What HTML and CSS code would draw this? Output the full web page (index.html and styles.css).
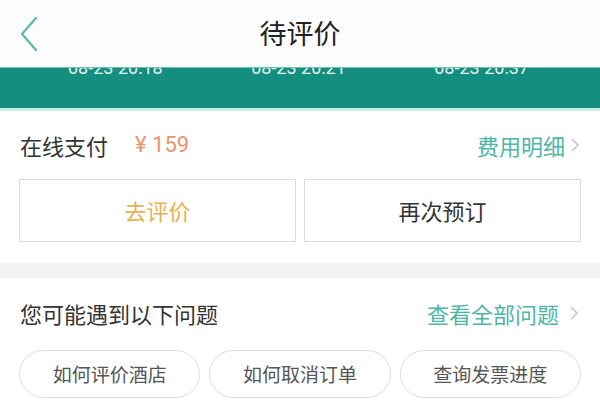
FILE: index.html
```html
<!DOCTYPE html>
<html lang="zh-CN">
<head>
	<meta charset="UTF-8">
	<title>待评价</title>
	<link rel="stylesheet" href="styles.css">
</head>
<body>
	<!-- 顶部导航 -->
	<div class="nav">
		<a href="#" class="back">
			<svg width="18" height="34" viewBox="0 0 18 34"><path d="M16 1 L2 17 L16 33" fill="none" stroke="#5cb8a6" stroke-width="2.2" stroke-linecap="round" stroke-linejoin="round"/></svg>
		</a>
		<h1 class="title">待评价</h1>
	</div>
	<!-- 订单进度 -->
	<div class="timeline">
		<div class="timeline-row">
			<span>08-23 20:18</span>
			<span>08-23 20:21</span>
			<span>08-23 20:37</span>
		</div>
	</div>
	<!-- 支付信息 -->
	<div class="block">
		<div class="row">
			<span class="label">在线支付</span>
			<span class="price">¥ 159</span>
			<a href="#" class="more">费用明细<svg width="10" height="16" viewBox="0 0 10 16"><path d="M2 2 L8 8 L2 14" fill="none" stroke="#c4c4c4" stroke-width="1.5"/></svg></a>
		</div>
		<div class="btns">
			<a href="#" class="btn btn-comment">去评价</a>
			<a href="#" class="btn">再次预订</a>
		</div>
	</div>
	<div class="gap"></div>
	<!-- 常见问题 -->
	<div class="block faq">
		<div class="row">
			<span class="label">您可能遇到以下问题</span>
			<a href="#" class="more more-all">查看全部问题<svg width="10" height="16" viewBox="0 0 10 16"><path d="M2 2 L8 8 L2 14" fill="none" stroke="#c4c4c4" stroke-width="1.5"/></svg></a>
		</div>
		<ul class="pills">
			<li>如何评价酒店</li>
			<li>如何取消订单</li>
			<li>查询发票进度</li>
		</ul>
	</div>
</body>
</html>
```

FILE: styles.css
```css
/*reset*/
body, div, ul, li, h1, a, span{
	margin: 0;
	padding: 0;
}
li{
	list-style: none;
}
a{
	text-decoration: none;
	color: #333;
}
body{
	background: #fff;
	font: 22px/1.2 "Noto Sans CJK SC", sans-serif;
	color: #333;
	overflow: hidden;
}
/*顶部导航*/
.nav{
	display: grid;
	grid-template-columns: 1fr auto 1fr;
	align-items: center;
	height: 67px;
	background: #fdfdfd;
}
.back{
	display: flex;
	padding-left: 20px;
}
.title{
	font-size: 27px;
	font-weight: normal;
	color: #222;
}
/*订单进度*/
.timeline{
	height: 40px;
	overflow: hidden;
	background: #138e7f;
	border-top: 1px solid #6fc2b6;
	border-bottom: 3px solid #c9ede7;
	box-sizing: content-box;
}
.timeline-row{
	display: flex;
	justify-content: space-between;
	margin-top: -10px;
	padding: 0 71px 0 68px;
	font: 18px/20px Roboto, sans-serif;
	color: #e4f3f0;
}
/*支付信息*/
.block{
	padding: 16px 19px 21px;
}
.row{
	display: flex;
	align-items: center;
	height: 36px;
	padding-left: 1px;
}
.price{
	margin: 1px 0 0 27px;
	font-family: Roboto, "Noto Sans CJK SC", sans-serif;
	color: #e8956c;
}
.more{
	display: flex;
	align-items: center;
	margin-left: auto;
	padding-right: 1px;
	color: #4db6a6;
}
.more svg{
	margin-left: 5px;
}
.more-all{
	padding-right: 2px;
}
.more-all svg{
	margin-left: 10px;
}
.btns{
	display: grid;
	grid-template-columns: 1fr 1fr;
	gap: 8px;
	margin-top: 16px;
}
.btn{
	display: flex;
	align-items: center;
	justify-content: center;
	height: 61px;
	border: 1px solid #dcdcdc;
}
.btn-comment{
	color: #e3b254;
}
.gap{
	height: 15px;
	background: #f2f2f2;
}
/*常见问题*/
.faq{
	padding-top: 17px;
}
.pills{
	display: grid;
	grid-template-columns: repeat(3, 1fr);
	gap: 9px;
	margin-top: 19px;
}
.pills li{
	display: flex;
	align-items: center;
	justify-content: center;
	height: 46px;
	border: 1px solid #dedede;
	border-radius: 24px;
	font-size: 19px;
	color: #555;
}
```
